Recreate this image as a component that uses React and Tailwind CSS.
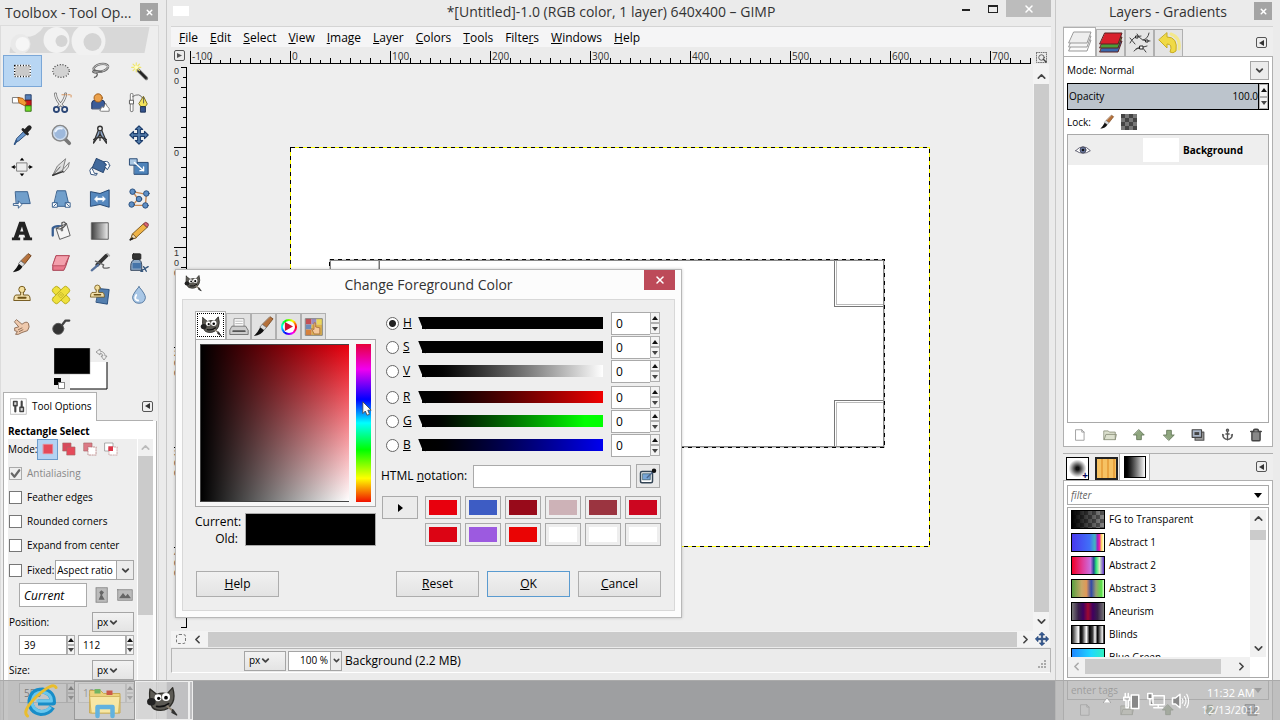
import React from 'react';
import { ChevronDown, ChevronUp, ChevronLeft, ChevronRight, X, Anchor, Trash2 } from 'lucide-react';

const Icon = ({ children, className = 'size-6' }) => (
    <svg viewBox="0 0 24 24" className={className} fill="none" strokeLinecap="round" strokeLinejoin="round">
        {children}
    </svg>
);

const Wilber = ({ className }) => (
    <Icon className={className}>
        <path d="M3 3 L8 7 Q12 5.500 16 6.500 L20 2 Q22 9 20 13 Q17 19 11 19 Q5 19 4 15 Q2 9 3 3Z" fill="#5c5a54" stroke="#2e2d29" />
        <circle cx="9" cy="9.500" r="2.600" fill="#fff" />
        <circle cx="15" cy="9" r="3" fill="#fff" />
        <circle cx="9.500" cy="10" r="1.200" fill="#000" />
        <circle cx="15" cy="9.500" r="1.400" fill="#000" />
        <ellipse cx="4" cy="12.500" rx="3.200" ry="2.800" fill="#222" />
        <path d="M8 16 Q13 17 17 14" stroke="#111" strokeWidth="1.300" />
        <path d="M16 16 L21 20" stroke="#8a7f70" strokeWidth="1.500" />
        <path d="M20 18.500 L23 22.500 L19.500 20.500Z" fill="#333" stroke="#333" />
    </Icon>
);

const Brush = ({ className }) => (
    <Icon className={className}>
        <path d="M19 2 L22 4 L15 13 L11 10Z" fill="#b5713b" stroke="#6b3d18" strokeWidth=".8" />
        <path d="M11 10 L15 13 L12.500 16 L8.500 13Z" fill="#ddd" stroke="#777" strokeWidth=".8" />
        <path d="M8.500 13 L12.500 16 Q10 21 2 22 Q6 18 8.500 13Z" fill="#111" />
    </Icon>
);

const Stamp = () => (
    <>
        <circle cx="12" cy="6" r="3.500" fill="#f3df9d" stroke="#6d5215" />
        <path d="M10.500 9 L10.500 12 L5 12 Q3 13 3 18 L21 18 Q21 13 19 12 L13.500 12 L13.500 9" fill="#f1dfac" stroke="#6d5215" />
        <path d="M8 15 H16" stroke="#6d5215" strokeWidth="2" />
    </>
);

const tools = [
    ['Rectangle Select', <><rect x="4" y="6" width="17" height="12" fill="#c9c9c9" stroke="#fff" strokeWidth="1.500" /><rect x="4" y="6" width="17" height="12" stroke="#000" strokeWidth="1.500" strokeDasharray="1 2" strokeLinecap="butt" /></>],
    ['Ellipse Select', <><ellipse cx="12" cy="12" rx="9" ry="7" fill="#d2d2d2" stroke="#333" strokeWidth="1.300" strokeDasharray="1 2" strokeLinecap="butt" /></>],
    ['Free Select', <><ellipse cx="13" cy="8.500" rx="8" ry="4" transform="rotate(-12 13 8.500)" stroke="#666" strokeWidth="2.600" /><ellipse cx="13" cy="8.500" rx="8" ry="4" transform="rotate(-12 13 8.500)" stroke="#ccc" /><path d="M6 11 Q2 13 6 14 Q11 14 8 18 L6 19 M6 11 L14 13" stroke="#666" strokeWidth="1.500" /></>],
    ['Fuzzy Select', <><path d="M11 11 L20 20" stroke="#777" strokeWidth="4" /><path d="M12 12 L19.500 19.500" stroke="#222" strokeWidth="2.400" /><path d="M9 3 V13 M4 8 H14 M5.500 4.500 L12.500 11.500 M12.500 4.500 L5.500 11.500" stroke="#f0e768" strokeWidth="1.200" /><circle cx="9" cy="8" r="2" fill="#fffec2" /></>],
    ['Select by Color', <><rect x="16" y="3" width="6" height="6" fill="#5680b8" stroke="#223a66" /><rect x="16" y="9" width="6" height="6" fill="#ce1a1a" stroke="#701010" /><rect x="16" y="15" width="6" height="6" fill="#72e027" stroke="#327010" /><rect x="2" y="6" width="7" height="6" fill="#fff" stroke="#777" /><path d="M8 6 L13 7 L17 12 L15 15 L9 12Z" fill="#f29a36" stroke="#a7570c" /></>],
    ['Scissors', <><path d="M6 2 Q6 9 15 17 M17 2 Q17 9 8 17" stroke="#666" strokeWidth="3" /><path d="M6 2 Q6 9 15 17 M17 2 Q17 9 8 17" stroke="#eee" strokeWidth="1.500" /><circle cx="7" cy="19" r="2.800" fill="#eee" stroke="#2c4777" strokeWidth="2" /><circle cx="16" cy="19" r="2.800" fill="#eee" stroke="#2c4777" strokeWidth="2" /><path d="M13 3 H23 V6" stroke="#d68d51" strokeDasharray="2 1.500" /></>],
    ['Foreground Select', <><path d="M3 18 V12 Q3 9 7 9 H14 Q17 9 17 12 V18Z" fill="#3c5c98" stroke="#152a56" /><circle cx="10" cy="6.500" r="4.500" fill="#eba14c" stroke="#9a5713" /><path d="M12 20 L14 16 L16 17 L18 12 L20 16 Q23 17 22 21 H14Z" fill="#fff" stroke="#777" /></>],
    ['Paths', <><path d="M4 3 V20" stroke="#777" strokeWidth="4" /><path d="M4 3 V20" stroke="#fff" strokeWidth="2" /><rect x="2" y="9" width="4" height="4" fill="#fff" stroke="#555" /><path d="M5 5 Q13 0 16 7" stroke="#666" /><path d="M17 5 L21 13 L19 16 H14 L12 13Z" fill="#f2e35c" stroke="#7b6b11" /><path d="M17 6 V12" stroke="#555" /><rect x="14" y="16" width="5" height="6" fill="#35548d" stroke="#162b50" /></>],
    ['Color Picker', <><path d="M5 20 L6 16 L14 8 L17 11 L9 18Z" fill="#6997cd" stroke="#274772" /><path d="M13 6 L18 11" stroke="#222" strokeWidth="3" /><path d="M16 8 L20 4" stroke="#222" strokeWidth="5" /><path d="M4 22 L6 18" stroke="#305687" strokeWidth="2" /></>],
    ['Zoom', <><path d="M16 16 L21 21" stroke="#777" strokeWidth="4" /><circle cx="11" cy="10" r="8.500" fill="#b5c9e1" stroke="#888" strokeWidth="1.500" /><circle cx="11" cy="10" r="6.800" fill="#9eb9dc" stroke="#dfe8f2" /><path d="M6 8 Q8 4 13 5" stroke="#edf5ff" strokeWidth="2" /></>],
    ['Measure', <><path d="M10 7 L5 20 L5 21 L12 11 L19 21 V19 L14 7Z" fill="#90a8c9" stroke="#333" strokeWidth="1.300" /><circle cx="12" cy="5" r="2.500" fill="#eee" stroke="#333" strokeWidth="1.500" /><path d="M5 17 Q12 12 19 17 M12 9 V18" stroke="#333" strokeWidth="1.300" /></>],
    ['Move', <path d="M12 2 L16 6 H13.500 V10.500 H18 V8 L22 12 L18 16 V13.500 H13.500 V18 H16 L12 22 L8 18 H10.500 V13.500 H6 V16 L2 12 L6 8 V10.500 H10.500 V6 H8Z" fill="#547eac" stroke="#1d3d6c" strokeWidth="1.200" />],
    ['Align', <><rect x="6.500" y="7.500" width="11" height="9" fill="#eee" stroke="#777" /><path d="M12 2 L14.500 5 H9.500Z M12 22 L14.500 19 H9.500Z M1 12 L4 9.500 V14.500Z M23 12 L20 9.500 V14.500Z" fill="#000" /><path d="M1 12 H5 M19 12 H23" stroke="#000" /></>],
    ['Crop', <><path d="M3 21 L8 11 L17 3 L14 15Z" fill="#ddd" stroke="#777" /><path d="M3 21 L11 12" stroke="#555" /><path d="M14 15 L21 7 L20 12 L15 18Z" fill="#eee" stroke="#777" /><path d="M3 21 L14 17" stroke="#333" strokeWidth="1.500" /></>],
    ['Rotate', <><rect x="5" y="5" width="13" height="11" fill="#41699c" stroke="#24426c" transform="rotate(24 12 11)" /><path d="M17 6 Q22 5 22 10 L23 10 L20 15 L17 11 L19 10 Q19 8 17 8Z M3 13 L5 17 Q5 20 9 19 L8 21 L2 20 L1 16Z" fill="#fff" stroke="#264876" /></>],
    ['Scale', <><rect x="7" y="7" width="15" height="13" fill="#4e83ba" stroke="#1c416d" /><rect x="2" y="3" width="8" height="7" fill="#a9c7e4" stroke="#1c416d" /><path d="M7 7 L17 16 M17 12 V16 H13" stroke="#fff" strokeWidth="1.500" /></>],
    ['Shear', <><path d="M5 4 H18 L21 17 H6Z" fill="#719fcb" stroke="#315a89" /><path d="M3 17 H8 V14 L12 18 L8 22 V19 H3Z" fill="#fff" stroke="#315a89" /></>],
    ['Perspective', <><path d="M8 3 H17 L21 20 H4Z" fill="#719fcb" stroke="#315a89" /><path d="M3 16 H8 V21 H3Z M17 16 H22 V21 H17Z" fill="#fff" stroke="#315a89" /><path d="M4 20 L7 17 M18 17 L21 20" stroke="#315a89" /></>],
    ['Flip', <><path d="M2 4 L12 6 L22 2 V21 L12 18 L2 20Z" fill="#5587bd" stroke="#1c416d" /><path d="M6 12 L9 9 V11 H15 V9 L18 12 L15 15 V13 H9 V15Z" fill="#fff" stroke="#fff" strokeWidth=".5" /></>],
    ['Cage Transform', <><path d="M5 4 L20 7 L19 19 L5 19 L11 12 L5 4" stroke="#c78955" strokeWidth="1.500" /><g fill="#5f8fc5" stroke="#244a79"><circle cx="5" cy="4" r="3" /><circle cx="20" cy="6" r="3" /><circle cx="4" cy="18" r="3" /><circle cx="19" cy="19" r="3" /><circle cx="12" cy="12" r="3" /></g></>],
    ['Text', <path d="M1 22 V19 H3 L9 2 H15 L21 19 H23 V22 H13.500 V19 H15.500 L14.500 16 H9 L8 19 H10 V22Z M10 12.500 H13.500 L12 7Z" fill="#222" fillRule="evenodd" />],
    ['Bucket Fill', <><path d="M3 17 V9 Q5 6 12 7" stroke="#375d90" strokeWidth="2.500" /><path d="M7 9 L18 4 L22 17 L11 21Z" fill="#f5f5f5" stroke="#555" /><path d="M7 9 Q13 12 18 4 M13 11 V3 Q16 1 17 4" stroke="#555" strokeWidth="1.300" /><circle cx="13" cy="11" r="1.500" fill="#777" /></>],
    ['Blend', <><defs><linearGradient id="blend"><stop stopColor="#444" /><stop offset="1" stopColor="#eee" /></linearGradient></defs><rect x="3" y="3" width="18" height="18" fill="url(#blend)" stroke="#555" /></>],
    ['Pencil', <><path d="M3 21 L5 15 L17 4 L21 8 L9 19Z" fill="#efb345" stroke="#7b571b" /><path d="M17 4 Q19 1 22 4 Q23 6 21 8Z" fill="#db6171" stroke="#7a3941" /><path d="M3 21 L5 15 L9 19Z" fill="#f0dfbd" stroke="#7b571b" /><path d="M2.500 21.500 L5 20" stroke="#222" strokeWidth="2" /></>],
    ['Paintbrush', <><path d="M19 2 L22 4 L15 13 L11 10Z" fill="#b5713b" stroke="#6b3d18" /><path d="M11 10 L15 13 L12 16 L8.500 13Z" fill="#ddd" stroke="#777" /><path d="M8.500 13 L12.500 16 Q10 21 2 22 Q6 18 8.500 13Z" fill="#111" /></>],
    ['Eraser', <><path d="M7 4 H21 L17 16 L15 20 H3 V16Z" fill="#e9798c" stroke="#a13347" /><path d="M7 4 H21 L16 15 H3Z" fill="#f3a0ac" stroke="#b84d5e" /></>],
    ['Airbrush', <><path d="M9 14 L19 4" stroke="#333" strokeWidth="4" /><path d="M3 20 L10 14" stroke="#55709b" strokeWidth="2.500" /><path d="M7 10 L16 14 Q13 19 22 17" stroke="#666" strokeWidth="1.500" /><path d="M20 2 L22 4" stroke="#aaa" strokeWidth="2" /></>],
    ['Ink', <><path d="M7 8 Q3 10 3 15 V20 H15 V14 Q15 10 12 8Z" fill="#8ca8c6" stroke="#283a53" /><rect x="5" y="2" width="9" height="6" rx="1" fill="#333" stroke="#222" /><rect x="5" y="12" width="9" height="6" fill="#4574a9" /><path d="M15 20 L22 16 M17 16 L20 21 M14 21 H16" stroke="#35557b" strokeWidth="1.500" /></>],
    ['Clone', <Stamp />],
    ['Heal', <><g stroke="#b5a81c" fill="#efe13c"><rect x="1" y="8" width="22" height="8" rx="3" transform="rotate(45 12 12)" /><rect x="1" y="8" width="22" height="8" rx="3" transform="rotate(-45 12 12)" /></g><path d="M9 12 L12 9 L15 12 L12 15Z M11 12 H13" stroke="#c4b52c" /></>],
    ['Perspective Clone', <><path d="M11 5 L22 6 L20 22 L8 20Z" fill="#537eae" stroke="#244a79" /><g transform="translate(-1 -1) scale(.85)"><Stamp /></g></>],
    ['Blur', <><path d="M12 3 Q5 11 5 15 Q6 21 12 21 Q18 21 19 15 Q19 11 12 3Z" fill="#a9c7e6" stroke="#50749d" /><path d="M9 12 Q6 17 11 18" stroke="#fff" strokeWidth="2" /></>],
    ['Smudge', <><path d="M4 6 L6 4 L12 9 Q17 5 19 8 Q21 12 18 16 L12 18 L8 20 L5 20 L7 17 L4 16 L4 13 L8 12Z" fill="#eec9ad" stroke="#8b6951" /><path d="M8 15 L12 13 M9 17 L13 15" stroke="#8b6951" /></>],
    ['Dodge / Burn', <><circle cx="9" cy="14" r="6" fill="#333" stroke="#555" /><path d="M13 10 L17 5 H21" stroke="#444" strokeWidth="2.500" /></>],
];

const TitleButton = () => (
    <button aria-label="Close" className="h-[18px] w-[18px] shrink-0 bg-[#a4a4a4] text-white flex items-center justify-center">
        <X size={9} strokeWidth={4} />
    </button>
);

const DockMenu = () => (
    <button aria-label="Configure tab" className="size-[11px] shrink-0 rounded-[2px] border border-[#555] flex items-center justify-center text-[#333]">
        <svg viewBox="0 0 6 6" className="size-[6px]"><path d="M5 0 V6 L0 3Z" fill="currentColor" /></svg>
    </button>
);

const Spin = ({ className = 'w-[10px]' }) => (
    <span className={`flex flex-col justify-between shrink-0 ${className}`}>
        <button aria-label="Increase" className="flex-1 border border-[#b0b0b0] bg-[#f3f3f3] flex items-center justify-center">
            <svg viewBox="0 0 6 4" className="w-[6px] h-1"><path d="M0 4 L3 0 L6 4Z" fill="#111" /></svg>
        </button>
        <button aria-label="Decrease" className="flex-1 border border-[#b0b0b0] bg-[#f3f3f3] flex items-center justify-center">
            <svg viewBox="0 0 6 4" className="w-[6px] h-1"><path d="M0 0 L3 4 L6 0Z" fill="#444" /></svg>
        </button>
    </span>
);

const Dropdown = ({ label, value, className }) => (
    <span className={`relative flex items-center ${className}`}>
        <select aria-label={label} className="appearance-none w-full h-full border border-[#a5a5a5] outline-none pl-1 bg-linear-to-b from-[#f2f2f2] to-[#e4e4e4]">
            <option>{value}</option>
        </select>
        <ChevronDown size={11} strokeWidth={4} className="absolute left-[16px] text-[#444] pointer-events-none" />
    </span>
);

const modes = [
    ['Replace', <rect x="5" y="5" width="14" height="14" fill="#e54a5a" stroke="#ee8890" />],
    ['Add', <><rect x="3" y="3" width="12" height="12" fill="#d9495a" stroke="#a66" /><rect x="9" y="9" width="12" height="12" fill="#e54a5a" stroke="#a66" /></>],
    ['Subtract', <><rect x="3" y="3" width="12" height="12" fill="#dc7a86" stroke="#a66" /><rect x="9" y="9" width="12" height="12" fill="#fff" stroke="#a66" strokeDasharray="2 2" /></>],
    ['Intersect', <><rect x="3" y="3" width="12" height="12" fill="#fff" stroke="#888" /><rect x="9" y="9" width="12" height="12" fill="#fff" stroke="#b88" strokeDasharray="2 2" /><rect x="8" y="8" width="7" height="7" fill="#dc3648" /></>],
];

const Check = ({ label, checked, disabled }) => (
    <label className={`h-6 flex items-center gap-[5px] ${disabled ? 'text-[#888]' : ''}`}>
        <span className="relative size-[13px] shrink-0">
            <input type="checkbox" defaultChecked={checked} disabled={disabled} className="block appearance-none size-[13px] border border-[#777] bg-white disabled:border-[#aaa] disabled:bg-[#eee]" />
            {checked && <Icon className="absolute inset-0 size-[13px]"><path d="M5 12 L10 18 L19 6" stroke="#666" strokeWidth="4" /></Icon>}
        </span>
        {label}
    </label>
);

const PairField = ({ label, value }) => (
    <span className="flex h-5 w-[56px]">
        <input aria-label={label} defaultValue={value} className="w-[48px] border border-[#aaa] bg-white pl-1" />
        <Spin className="w-2" />
    </span>
);

const ToolOptions = () => (
    <div className="flex-1 min-h-0 ml-[2px] mr-[1px] border-x border-[#b0b0b0] bg-white text-[10px] flex flex-col">
        <h2 className="h-[18px] shrink-0 px-1 font-bold leading-[20px]">Rectangle Select</h2>
        <div className="flex-1 min-h-0 flex ml-1 mr-[3px]">
            <div className="flex-1 min-w-0 bg-[#eee]">
                <div className="flex h-5 items-center">
                    Mode:
                    <div className="flex">
                        {modes.map(([name, art], i) => (
                            <button key={name} title={name} className={`size-[21px] flex items-center justify-center ${i === 0 ? 'border border-[#6d9ccb] bg-[#b4d3f3]' : ''}`}>
                                <Icon className="size-4">{art}</Icon>
                            </button>
                        ))}
                    </div>
                </div>
                <div className="pl-[1px] pt-[2px]">
                    <Check label="Antialiasing" checked disabled />
                    <Check label="Feather edges" />
                    <Check label="Rounded corners" />
                    <Check label="Expand from center" />
                    <div className="flex items-center h-[26px] pr-[3px]">
                        <Check label="Fixed:" />
                        <span className="relative flex flex-1 h-5 ml-[1px]">
                            <select aria-label="Fixed" className="appearance-none w-full border border-[#a5a5a5] bg-white pl-[1px]"><option>Aspect ratio</option></select>
                            <span className="absolute right-0 inset-y-0 w-[18px] border border-[#a5a5a5] bg-[#ececec] flex items-center justify-center pointer-events-none"><ChevronDown size={11} strokeWidth={4} className="text-[#444]" /></span>
                        </span>
                    </div>
                    <div className="flex items-center h-6 pl-[10px]">
                        <input aria-label="Aspect" defaultValue="Current" className="w-[68px] h-6 border border-[#aaa] bg-white pl-1 text-[12px] italic" />
                        {['Portrait', 'Landscape'].map((name) => (
                            <button key={name} title={name} className="ml-[7px] w-4 flex justify-center">
                                <Icon className="size-4">
                                    <rect x={name === 'Portrait' ? 3 : 1} y={name === 'Portrait' ? 1 : 4} width={name === 'Portrait' ? 17 : 22} height={name === 'Portrait' ? 22 : 16} fill="#bbb" stroke="#777" strokeDasharray="2 1" />
                                    {name === 'Portrait' ? <path d="M11 5 L15 8 L12 12 L16 19 H7 L10 12 L8 8Z" fill="#666" /> : <path d="M3 17 L9 9 L13 14 L16 10 L21 17Z" fill="#666" />}
                                </Icon>
                            </button>
                        ))}
                    </div>
                    <div className="mt-[3px] flex h-6 items-center justify-between pr-[3px]">
                        Position: <Dropdown label="Position unit" value="px" className="w-[42px] h-5" />
                    </div>
                    <div className="flex h-[22px] items-center justify-between pl-[10px] pr-[3px]">
                        <PairField label="Position X" value="39" />
                        <PairField label="Position Y" value="112" />
                    </div>
                    <div className="mt-[2px] flex h-6 items-center justify-between pr-[3px]">
                        Size: <Dropdown label="Size unit" value="px" className="w-[42px] h-5" />
                    </div>
                    <div className="flex h-[22px] items-center justify-between pl-[10px] pr-[3px]">
                        <PairField label="Width" value="556" />
                        <PairField label="Height" value="189" />
                    </div>
                </div>
            </div>
            <div className="w-[15px] flex flex-col items-center bg-[#f0f0f0] ml-[1px]">
                <ChevronUp size={13} strokeWidth={3} className="text-[#bbb] my-[2px]" />
                <div className="w-full h-[159px] bg-[#cbcbcb]" />
            </div>
        </div>
    </div>
);

const Toolbox = () => (
    <aside className="bg-[#ebebeb] border-r border-[#c9c9c9] pr-[7px] flex flex-col min-h-0 overflow-hidden">
        <header className="h-[25px] pl-[5px] pr-[1px] pb-[1px] flex items-center justify-between">
            <h1 className="text-[14px] text-[#333] whitespace-nowrap">Toolbox - Tool Op...</h1>
            <TitleButton />
        </header>
        <div className="flex-1 min-h-0 flex flex-col bg-[#eee] border-l border-r border-t border-[#dcdcdc]">
            <svg viewBox="0 0 156 29" className="w-full h-[29px] shrink-0">
                <path d="M42 1 H148 L143 27 H8 Q9 13 21 11 Q35 12 42 1Z" fill="#d8d8d8" />
                <circle cx="19" cy="18" r="10" fill="#e9e9e9" /><circle cx="21" cy="18" r="7" fill="#f6f6f6" />
                <circle cx="55" cy="14" r="13" fill="#f2f2f2" /><circle cx="60" cy="15" r="6" fill="#d4d4d4" />
                <circle cx="87" cy="15" r="17" fill="#f1f1f1" /><circle cx="91" cy="16" r="9" fill="#d4d4d4" />
            </svg>
            <div className="grid grid-cols-4 ml-[2px]">
                {tools.map(([name, art], i) => (
                    <button key={name} title={name} className={`h-8 flex items-center justify-center ${i === 0 ? 'border border-[#7ba7d7] bg-[#b8d6f3]' : ''}`}>
                        <Icon className="size-[22px]">{art}</Icon>
                    </button>
                ))}
            </div>
            <div className="h-[49px] shrink-0 flex justify-center pl-1">
                <svg viewBox="0 0 56 44" className="w-14 h-11 mt-[5px]">
                    <path d="M16 14 H53 V41 H16Z" fill="#fff" />
                    <path d="M16 41 H53 V14" fill="none" stroke="#000" />
                    <rect width="36" height="26" fill="#000" stroke="#999" strokeWidth=".5" />
                    <rect y="30" width="7" height="7" fill="#000" /><rect x="4.500" y="34.500" width="6" height="6" fill="#fff" stroke="#888" />
                    <path d="M42 4 L46 1 V3 Q51 4 51 8 H53 L50 12 L47 8 H49 Q48 5 46 5 V7Z" fill="#eee" stroke="#888" strokeWidth=".8" />
                </svg>
            </div>
            <div className="h-[29px] shrink-0 flex items-center justify-between ml-[2px] mr-[5px] border-b border-[#b0b0b0]">
                <button className="h-[29px] w-[94px] border border-b-0 border-[#b0b0b0] bg-white flex items-center gap-[5px] pl-[6px] text-[10px] whitespace-nowrap">
                    <Icon className="size-[17px] shrink-0"><path d="M1 1 H23 V23 H1Z" stroke="#aaa" /><path d="M5 5 H10 V11 H5Z M14 13 H19 V19 H14Z" fill="#ddd" stroke="#444" strokeWidth="2" /><path d="M7.500 11 V19 M16.500 5 V13" stroke="#444" strokeWidth="3" /></Icon>
                    Tool Options
                </button>
                <DockMenu />
            </div>
            <ToolOptions />
        </div>
    </aside>
);

const menus = [['', 'F', 'ile'], ['', 'E', 'dit'], ['', 'S', 'elect'], ['', 'V', 'iew'], ['', 'I', 'mage'], ['', 'L', 'ayer'], ['', 'C', 'olors'], ['', 'T', 'ools'], ['Filte', 'r', 's'], ['', 'W', 'indows'], ['', 'H', 'elp']];
const ticks = Array.from({ length: 85 }, (_, i) => i * 10);

const RulerX = () => (
    <svg className="h-[17px] flex-1 min-w-0 overflow-hidden" shapeRendering="crispEdges">
        <path d="M3 16.500 H844" stroke="#000" />
        {ticks.map((x) => <path key={x} d={`M${x + 3.5} ${x % 100 === 0 ? 4 : x % 20 === 0 ? 11 : 13} V17`} stroke="#000" />)}
        {ticks.filter((x) => x % 100 === 0).map((x) => <text key={x} x={x + 5} y="13" fontSize="10" fill="#333">{x - 100}</text>)}
    </svg>
);

// the first label is scrolled half out of view, so only its last digits are drawn
const rulerLabels = [['00', 10], ['0', 92], ['100', 192], ['200', 292], ['300', 392], ['400', 492]];

const RulerY = () => (
    <svg className="w-4 shrink-0 h-full overflow-hidden font-['Liberation_Sans',sans-serif]" shapeRendering="crispEdges">
        <path d="M15.500 3 V563" stroke="#000" />
        {ticks.filter((y) => y < 570).map((y) => <path key={y} d={`M${(y - 80) % 100 === 0 ? 3 : y % 20 === 0 ? 10 : 12} ${y + 3.5} H16`} stroke="#000" />)}
        {rulerLabels.map(([label, top]) => [...label].map((ch, j) => (
            <text key={`${top}-${j}`} x="3" y={top + j * 10} fontSize="9" fill="#333">{ch}</text>
        )))}
    </svg>
);

const Canvas = () => (
    <div className="relative flex-1 min-w-0 overflow-hidden bg-[#eee]">
        <svg viewBox="0 0 640 400" className="absolute left-[103px] top-[83px] w-[640px] h-[400px]" shapeRendering="crispEdges" fill="none">
            <rect width="640" height="400" fill="#fff" />
            <rect x=".5" y=".5" width="639" height="399" stroke="#ffff00" />
            <rect x=".5" y=".5" width="639" height="399" stroke="#000" strokeDasharray="4 4" />
            <g stroke="#777">
                <rect x="39.500" y="112.500" width="50" height="47" /><rect x="544.500" y="112.500" width="50" height="47" />
                <rect x="544.500" y="253.500" width="50" height="47" />
            </g>
            <g stroke="#bbb">
                <path d="M88.500 114 V158 M546.500 114 V157.500 H593 M546.500 299 V255.500 H593" />
            </g>
            <rect x="40.500" y="113.500" width="553" height="186" stroke="#888" />
            <rect x="39.500" y="112.500" width="555" height="188" stroke="#ccc" />
            <rect x="39.500" y="112.500" width="555" height="188" stroke="#000" strokeDasharray="4 4" />
        </svg>
    </div>
);

const ImageWindow = () => (
    <main className="bg-[#ebebeb] h-[calc(100vh-40px)] min-w-0 flex flex-col px-1">
        <header className="relative h-[27px] shrink-0 flex items-start justify-between border-b border-[#d4d4d4]">
            <span className="mt-[6px] ml-[2px] w-4 h-[10px] bg-white" />
            <h1 className="absolute inset-x-0 top-0 h-6 leading-6 text-center text-[14px] text-[#333] pointer-events-none">*[Untitled]-1.0 (RGB color, 1 layer) 640x400 – GIMP</h1>
            <div className="flex items-start">
                <button aria-label="Minimize" className="w-[27px] h-[17px] flex justify-center items-end pb-[6px]"><span className="w-2 h-[2px] bg-[#222]" /></button>
                <button aria-label="Maximize" className="w-[27px] h-[17px] flex justify-center items-center"><span className="w-[10px] h-2 border border-t-2 border-[#222]" /></button>
                <button aria-label="Close" className="w-[45px] h-[17px] bg-[#bcbcbc] text-white flex justify-center items-center"><X size={12} strokeWidth={3} /></button>
            </div>
        </header>
        <nav className="h-5 shrink-0 bg-[#f5f5f6] flex items-end gap-3 pl-2 text-[12px]">
            {menus.map(([pre, key, post]) => <button key={key + post}>{pre}<u>{key}</u>{post}</button>)}
        </nav>
        <div className="flex h-[17px] shrink-0 mr-[2px]">
            <span className="w-4 flex items-center justify-center"><button aria-label="Image menu" className="size-[11px] rounded-[2px] border border-[#555] flex items-center justify-center"><svg viewBox="0 0 6 6" className="size-[5px]"><path d="M0 0 V6 L6 3Z" fill="#555" /></svg></button></span>
            <RulerX />
            <span className="w-4 flex items-end justify-center pb-[1px]"><Icon className="size-[11px]"><rect x="1" y="1" width="22" height="22" stroke="#666" strokeWidth="2" strokeDasharray="2 3" /><circle cx="12" cy="12" r="6" stroke="#555" strokeWidth="2" /><path d="M16 16 L22 22" stroke="#444" strokeWidth="3" /></Icon></span>
        </div>
        <div className="flex flex-1 min-h-0 mr-[2px]">
            <RulerY />
            <Canvas />
            <div className="w-4 bg-[#f3f3f3] flex flex-col items-center">
                <ChevronUp size={13} strokeWidth={3} className="mt-[6px] mb-[1px] text-[#444] shrink-0" />
                <div className="flex-1 w-[15px] bg-[#cbcbcb]" />
                <ChevronDown size={13} strokeWidth={3} className="my-[3px] text-[#444] shrink-0" />
            </div>
        </div>
        <div className="flex h-4 shrink-0 items-center bg-[#f3f3f3] mr-[1px]">
            <span className="w-5 flex justify-center"><span className="size-[10px] rounded-[3px] border border-dashed border-[#777]" /></span>
            <ChevronLeft size={13} strokeWidth={3} className="text-[#444] mr-1" />
            <div className="flex-1 h-[15px] bg-[#cbcbcb]" />
            <ChevronRight size={13} strokeWidth={3} className="text-[#444] mx-[2px]" />
            <Icon className="size-4"><path d="M12 2 L16 6 H13 V11 H18 V8 L22 12 L18 16 V13 H13 V18 H16 L12 22 L8 18 H11 V13 H6 V16 L2 12 L6 8 V11 H11 V6 H8Z" fill="#355b96" stroke="#1d3d6c" /></Icon>
        </div>
        <footer className="mt-[1px] mb-[7px] h-[25px] shrink-0 border border-[#b5b5b5] border-b-white flex items-center pl-[72px] text-[12px]">
            <Dropdown label="Unit" value="px" className="w-[42px] h-5 text-[10px]" />
            <span className="relative ml-[2px] h-5 w-[54px] text-[10px]">
                <select aria-label="Zoom" className="appearance-none w-full h-full border border-[#a5a5a5] bg-white pl-[11px]"><option>100 %</option></select>
                <span className="absolute right-0 inset-y-0 w-3 border border-[#a5a5a5] bg-[#ececec] flex items-center justify-center pointer-events-none"><ChevronDown size={9} strokeWidth={4} className="text-[#444]" /></span>
            </span>
            <span className="ml-[3px]">Background (2.2 MB)</span>
            <svg viewBox="0 0 8 8" className="size-2 ml-auto self-end mb-1 mr-1"><path d="M6 0 h2 v2 h-2z M3 3 h2 v2 h-2z M6 3 h2 v2 h-2z M0 6 h2 v2 h-2z M3 6 h2 v2 h-2z M6 6 h2 v2 h-2z" fill="#aaa" /></svg>
        </footer>
    </main>
);

const LayersIcon = ({ colors, line }) => (
    <Icon>
        {[...colors].reverse().map((c, i) => <path key={c + i} d={`M6 ${10 - i * 4} H23 L19 ${21 - i * 4} H1Z`} fill={c} stroke={line} />)}
    </Icon>
);

const layerTabs = [
    ['Layers', <LayersIcon colors={['#eee', '#f5f5f5', '#fafafa']} line="#999" />],
    ['Channels', <LayersIcon colors={['#d8202c', '#4c9c3a', '#3a68ad']} line="#5a2020" />],
    ['Paths', <Icon><path d="M2 12 Q5 5 13 5 M9 3 Q13 11 22 10 M6 20 Q13 12 18 21 M21 2 Q20 8 15 9 M2 7 L7 13 M19 15 L8 18" stroke="#444" /><path d="M8 5 h2 v2 h-2z M18 9 h2 v2 h-2z M12 15 h3 v3 h-3z" fill="#fff" stroke="#222" /></Icon>],
    ['Undo', <Icon><path d="M14 3 Q24 7 22 18" stroke="#f3e88c" strokeWidth="3" /><path d="M10 2 V6 Q21 6 19 20 Q16 23 13 21 Q16 13 10 13 V17 L2 9Z" fill="#f0da45" stroke="#c8ad22" /></Icon>],
];

const layerActions = [
    ['New layer', <path d="M5 3 H15 L19 7 V21 H5Z M15 3 V7 H19" fill="#fff" stroke="#999" strokeWidth="1.500" />],
    ['New group', <path d="M2 5 H9 L11 7 H21 V20 H2Z M2 20 L5 11 H23 L21 20" fill="#dce0ce" stroke="#8c917c" strokeWidth="1.500" />],
    ['Raise', <path d="M12 3 L21 12 H16 V20 H8 V12 H3Z" fill="#8fa67f" stroke="#65785a" strokeWidth="1.500" />],
    ['Lower', <path d="M12 21 L21 12 H16 V4 H8 V12 H3Z" fill="#8fa67f" stroke="#65785a" strokeWidth="1.500" />],
    ['Duplicate', <><rect x="7" y="7" width="15" height="14" fill="#999" stroke="#555" strokeWidth="2" /><rect x="2" y="3" width="16" height="13" fill="#aab6c8" stroke="#444" strokeWidth="2" /><rect x="6" y="7" width="8" height="5" fill="#444" /></>],
];

const gradients = [
    ['FG to Transparent', 'bg-[linear-gradient(to_right,#000,transparent),repeating-conic-gradient(#555_0_25%,#888_0_50%)] bg-[length:100%_100%,8px_8px]'],
    ['Abstract 1', 'bg-[linear-gradient(to_right,#4838ee,#4070f8_55%,#40b8c0_72%,#a020c0_80%,#ee20a0_86%,#ffe860_93%,#fff)]'],
    ['Abstract 2', 'bg-[linear-gradient(to_right,#f00028,#e040a0_35%,#c870e0_58%,#204890_68%,#28e078_75%,#d8f0c0_86%,#6030d0)]'],
    ['Abstract 3', 'bg-[linear-gradient(to_right,#58a040,#c8a868_30%,#e09858_45%,#3048a8_60%,#98a070_75%,#58e048_92%,#e0ffd0)]'],
    ['Aneurism', 'bg-[linear-gradient(to_right,#777,#382048_20%,#400060_35%,#a00830_50%,#400060_65%,#382048_80%,#777)]'],
    ['Blinds', 'bg-[linear-gradient(to_right,#222,#fff_20%,#000_27%,#333_33%,#fff_45%,#000_55%,#444_65%,#fff_72%,#000_80%,#eee_95%,#000)]'],
    ['Blue Green', 'bg-[linear-gradient(to_right,#2088ff,#20d8ff_60%,#30f0c0)]'],
];

const DockRight = () => (
    <aside className="bg-[#ebebeb] border-l border-[#c9c9c9] pl-[7px] pr-[7px] flex flex-col min-h-0 overflow-hidden text-[10px]">
        <header className="relative h-[27px] shrink-0 flex items-center justify-end border-b border-[#d4d4d4]">
            <h1 className="absolute inset-x-0 top-0 text-center text-[14px] leading-6 text-[#333] pointer-events-none">Layers - Gradients</h1>
            <span className="mr-[1px] mb-1"><TitleButton /></span>
        </header>
        <div className="h-[30px] shrink-0 flex items-end border-b border-[#b0b0b0] pr-[6px] bg-[#eee]">
            {layerTabs.map(([name, art], i) => (
                <button key={name} title={name} className={`flex items-center justify-center border border-b-0 border-[#b0b0b0] ${i === 0 ? 'w-[33px] h-[29px] bg-white' : 'w-[29px] h-[27px] bg-[#e4e4e4]'}`}>{art}</button>
            ))}
            <span className="ml-auto mb-2"><DockMenu /></span>
        </div>
        <section className="bg-white border border-t-0 border-[#b0b0b0] px-[3px] shrink-0">
            <div className="flex items-center h-[26px]">
                Mode:
                <span className="relative ml-[3px] flex-1 h-[19px]">
                    <select aria-label="Layer mode" className="appearance-none w-full h-full bg-white"><option>Normal</option></select>
                    <span className="absolute right-0 inset-y-0 w-[19px] border border-[#a5a5a5] bg-[#ececec] flex items-center justify-center pointer-events-none"><ChevronDown size={11} strokeWidth={4} className="text-[#444]" /></span>
                </span>
            </div>
            <div className="h-[27px] border border-black bg-[#bcc4cc] flex items-center pl-[1px]">
                <label htmlFor="opacity">Opacity</label>
                <input id="opacity" defaultValue="100.0" className="flex-1 min-w-0 text-right bg-transparent" />
                <Spin className="w-[10px] h-full border-l border-black bg-white" />
            </div>
            <div className="h-6 flex items-center">
                Lock:
                <button title="Lock pixels" className="ml-[8px]"><Brush className="size-4" /></button>
                <button title="Lock alpha" className="ml-[6px] size-4 bg-[repeating-conic-gradient(#777_0_25%,#444_0_50%)] bg-[length:8px_8px]" />
            </div>
            <div className="h-[289px] border border-[#a9a9a9]">
                <div className="h-[30px] bg-[#eee] flex items-center">
                    <Icon className="size-4 ml-[7px]"><path d="M1 13 Q12 1 23 13 Q12 21 1 13Z" fill="#fff" stroke="#667" strokeWidth="1.500" /><circle cx="12" cy="12" r="4.500" fill="#6878a0" stroke="#334" /><circle cx="12" cy="12" r="2" fill="#111" /></Icon>
                    <span className="ml-[52px] w-9 h-6 bg-white" />
                    <strong className="ml-1">Background</strong>
                </div>
            </div>
            <div className="h-[23px] flex items-center justify-between px-[6px]">
                {layerActions.map(([name, art]) => <button key={name} title={name}><Icon className="size-[14px]">{art}</Icon></button>)}
                <button title="Anchor"><Anchor size={13} strokeWidth={2.5} className="text-[#555]" /></button>
                <button title="Delete"><Trash2 size={14} strokeWidth={2.5} className="text-[#444] fill-[#888]" /></button>
            </div>
        </section>
        <div className="mt-[6px] h-[28px] shrink-0 flex items-end border-t border-b border-[#b0b0b0] bg-[#eee] pl-[3px] pr-[6px]">
            <button title="Brushes" className="mr-[6px] size-[23px] border border-black bg-[radial-gradient(circle,#111_10%,#fff_60%)] flex items-end justify-end text-[10px] leading-[8px] font-bold text-[#005]">+</button>
            <button title="Patterns" className="mr-[1px] size-[23px] border-2 border-[#222] bg-[repeating-linear-gradient(to_right,#f6c263_0_4px,#e9a440_4px_6px)]" />
            <button title="Gradients" className="w-[31px] h-[27px] border border-b-0 border-[#b0b0b0] bg-white flex items-center justify-center"><span className="size-[22px] border border-black bg-linear-to-r from-black to-white" /></button>
            <span className="ml-auto mb-2"><DockMenu /></span>
        </div>
        <section className="bg-white border-x border-[#b0b0b0] px-[3px] pt-[4px] shrink-0">
            <div className="h-5 border border-[#a9a9a9] flex items-center pr-[6px]">
                <input aria-label="Filter" placeholder="filter" className="flex-1 min-w-0 px-[3px] italic placeholder:text-[#666]" />
                <svg viewBox="0 0 8 5" className="w-2 h-[5px]"><path d="M0 0 H8 L4 5Z" fill="#000" /></svg>
            </div>
            <div className="mt-[2px] h-[171px] border border-[#a9a9a9] flex flex-col">
                <div className="flex-1 min-h-0 flex">
                    <ul className="flex-1 overflow-hidden pl-[3px]">
                        {gradients.map(([name, fill]) => (
                            <li key={name} className="h-[23px] flex items-center gap-1">
                                <span className={`w-[34px] h-[19px] border border-black ${fill}`} />{name}
                            </li>
                        ))}
                    </ul>
                    <div className="w-4 mr-[2px] mt-[2px] bg-[#f1f1f1] flex flex-col items-center">
                        <ChevronUp size={13} strokeWidth={3} className="text-[#444] my-[2px]" />
                        <div className="h-[10px] w-full bg-[#cbcbcb] mt-[3px]" />
                        <ChevronDown size={13} strokeWidth={3} className="text-[#444] mt-auto mb-[2px]" />
                    </div>
                </div>
                <div className="h-5 bg-[#f1f1f1] mr-[18px] pb-[2px] flex items-center shrink-0">
                    <ChevronLeft size={13} strokeWidth={3} className="text-[#aaa] mx-[2px]" />
                    <div className="h-[15px] w-[136px] bg-[#cbcbcb]" />
                    <ChevronRight size={13} strokeWidth={3} className="text-[#444] ml-auto mr-[2px]" />
                </div>
            </div>
            <div className="mt-[2px] h-5 border border-[#a9a9a9] flex items-center pr-[6px]">
                <input aria-label="Tags" placeholder="enter tags" className="flex-1 min-w-0 px-[3px] placeholder:text-[#777]" />
                <svg viewBox="0 0 8 5" className="w-2 h-[5px]"><path d="M0 0 H8 L4 5Z" fill="#777" /></svg>
            </div>
            <div className="h-5 flex items-center justify-between px-[11px]">
                {layerActions.map(([name, art]) => <Icon key={name} className="size-[14px]">{art}</Icon>)}
            </div>
        </section>
    </aside>
);

const channels = [
    ['H', 'bg-black'],
    ['S', 'bg-black'],
    ['V', 'bg-linear-to-r from-black to-white'],
    ['R', 'bg-linear-to-r from-black to-[#f00000]'],
    ['G', 'bg-linear-to-r from-black to-[#00ff00] to-90%'],
    ['B', 'bg-linear-to-r from-black to-[#0000f0]'],
];

const swatches = [
    'bg-[#e8000d]', 'bg-[#3d5cc4]', 'bg-[#980a1a]', 'bg-[#cdb2b7]', 'bg-[#9b3440]', 'bg-[#cc0620]',
    'bg-[#dc0414]', 'bg-[#9c5ae0]', 'bg-[#ea0404]', 'bg-white', 'bg-white', 'bg-white',
];

const pickerTabs = [
    ['GIMP', <Wilber className="size-[22px]" />],
    ['CMYK', <Icon className="size-[20px]"><path d="M6 11 V2 H18 V11" fill="#fff" stroke="#888" /><path d="M8 5 H16 M8 8 H16" stroke="#aaa" /><path d="M4 11 H20 L23 16 V21 H1 V16Z" fill="#ccc" stroke="#666" /><path d="M5 17 H19" stroke="#555" strokeWidth="2" /></Icon>],
    ['Watercolor', <Brush className="size-[23px]" />],
    ['Wheel', <span className="size-4 rounded-full bg-[conic-gradient(from_90deg,#f00,#f0f,#00f,#0ff,#0f0,#ff0,#f00)] flex items-center justify-center"><span className="size-3 rounded-full bg-white flex items-center justify-center"><svg viewBox="0 0 10 10" className="size-[9px]"><path d="M1 0 L10 5 L1 10Z" fill="#d01030" /></svg></span></span>],
    ['Palette', <Icon className="size-[20px]"><path d="M2 2 H9 V9 H2Z" fill="#c34f55" /><path d="M9 2 H15 V9 H9Z" fill="#9a8cc0" /><path d="M15 2 H22 V9 H15Z" fill="#ead65c" /><path d="M2 9 H9 V15 H2Z" fill="#6e8cba" /><path d="M9 9 H22 V22 H9Z" fill="#ddb24c" /><path d="M2 15 H9 V22 H2Z" fill="#d7813c" /><path d="M2 2 H22 V22 H2Z" stroke="#777" /><path d="M12 20 L9 14 L12 15 V7 H14 V12 L19 13 V20Z" fill="#f5c99d" stroke="#a56c3d" /></Icon>],
];

const DialogButton = ({ first, rest, primary }) => (
    <button className={`h-[26px] w-[83px] border bg-linear-to-b from-[#f1f1f1] to-[#e3e3e3] ${primary ? 'border-[#5a9bd0]' : 'border-[#adadad]'}`}><u>{first}</u>{rest}</button>
);

const ColorDialog = () => (
    <div role="dialog" aria-label="Change Foreground Color" className="absolute left-[175px] top-[269px] w-[507px] bg-[#fcfcfc] border border-[#b8b8b8] px-[6px] pb-[6px] text-[12px] shadow-[0_0_3px_rgba(0,0,0,0.2)]">
        <header className="relative h-[29px] flex items-start justify-between">
            <Wilber className="size-[18px] mt-1 ml-[2px]" />
            <h2 className="absolute inset-x-0 top-0 text-center text-[14px] leading-[30px] text-[#333] pointer-events-none">Change Foreground Color</h2>
            <button aria-label="Close dialog" className="w-[31px] h-5 bg-[#bd4a59] text-white flex items-center justify-center"><X size={12} strokeWidth={3} /></button>
        </header>
        <div className="border border-[#d8d8d8] bg-[#eee] pl-3 pr-[13px] pt-[11px] pb-[13px]">
            <div className="flex justify-between">
                <div className="w-[181px]">
                    <div className="flex items-end h-7">
                        {pickerTabs.map(([name, art], i) => (
                            <button key={name} title={name} className={`flex items-center justify-center border border-b-0 border-[#b0b0b0] ${i === 0 ? 'w-[31px] h-[28px] bg-white outline outline-dotted outline-black -outline-offset-3' : 'w-[25px] h-[26px] bg-[#e2e2e2]'}`}>{art}</button>
                        ))}
                    </div>
                    <div className="h-[168px] border border-[#a9a9a9] bg-[#f7f7f7] p-1 flex gap-[7px]">
                        <div className="flex-1 border border-[#444] border-r-0 bg-[linear-gradient(to_right,#000,transparent),linear-gradient(to_bottom,#ea000e,#fff)]" />
                        <div className="relative w-[15px] bg-[linear-gradient(to_bottom,#e6003a,#f000f0_16%,#0000ff_35%,#00ffff_50%,#00ff00_67%,#ffff00_85%,#f01000)]">
                            <svg viewBox="0 0 12 18" className="absolute left-[6px] top-[57px] w-[10px] h-[15px]"><path d="M1 1 V15 L4 12 L6 17 L9 16 L7 11 H11Z" fill="#fff" stroke="#444" /></svg>
                        </div>
                    </div>
                    <div className="mt-[6px] h-[33px] flex">
                        <div className="w-12 text-right mr-[2px] pr-[5px] leading-[17px]"><div>Current:</div><div>Old:</div></div>
                        <div className="flex-1 border border-[#aaa] bg-black" />
                    </div>
                </div>
                <div className="w-[280px]">
                    {channels.map(([name, fill], i) => (
                        <div key={name} className={`h-6 flex items-center pr-[1px] ${i === 3 ? 'mt-[2px]' : ''}`}>
                            <label className="flex items-center gap-1 w-[36px]">
                                <input type="radio" name="channel" defaultChecked={i === 0} className="appearance-none size-[13px] rounded-full border border-[#666] bg-white ml-[5px] shrink-0 checked:bg-[radial-gradient(circle,#222_0_3px,#fff_4px)]" />
                                <u>{name}</u>
                            </label>
                            <input type="range" aria-label={`${name} slider`} min="0" max="255" defaultValue="0" className={`appearance-none ml-[5px] h-3 w-[181px] ${fill} [&::-webkit-slider-thumb]:appearance-none [&::-webkit-slider-thumb]:-ml-1 [&::-webkit-slider-thumb]:w-2 [&::-webkit-slider-thumb]:h-[13px] [&::-webkit-slider-thumb]:bg-black [&::-webkit-slider-thumb]:[clip-path:polygon(0_0,100%_0,100%_100%,45%_70%)]`} />
                            <input aria-label={`${name} value`} defaultValue="0" className="ml-auto w-[39px] h-[23px] border border-r-0 border-[#aaa] bg-white pl-1" />
                            <Spin className="w-[10px] h-[22px]" />
                        </div>
                    ))}
                    <div className="mt-[6px] h-[26px] flex items-center justify-between pr-[1px]">
                        <label htmlFor="html">HTML <u>n</u>otation:</label>
                        <input id="html" className="h-[23px] w-[158px] border border-[#aaa] bg-white px-1" />
                        <button aria-label="Pick color" className="size-6 border border-[#aaa] bg-[#e9e9e9] flex items-center justify-center"><Icon className="size-[18px]"><rect x="2" y="6" width="16" height="15" rx="2" fill="#fff" stroke="#345" strokeWidth="2" /><rect x="5" y="9" width="10" height="8" fill="#77a5d7" stroke="#356" /><path d="M11 14 L19 6" stroke="#4b668c" strokeWidth="2" /><circle cx="20" cy="5" r="3" fill="#111" /></Icon></button>
                    </div>
                    <div className="mt-[7px] flex items-start justify-between">
                        <button aria-label="Add to history" className="ml-[1px] w-9 h-[23px] border border-[#aaa] bg-[#ebebeb] flex items-center justify-center"><svg viewBox="0 0 5 8" className="w-[5px] h-2"><path d="M0 0 L5 4 L0 8Z" fill="#000" /></svg></button>
                        <div className="grid grid-cols-6 gap-x-1 gap-y-1">
                            {swatches.map((c, i) => <button key={i} aria-label={`Recent color ${i + 1}`} className="w-9 h-[23px] border border-[#aaa] bg-[#eee] p-[3px]"><span className={`block h-full ${c}`} /></button>)}
                        </div>
                    </div>
                </div>
            </div>
            <div className="mt-[25px] flex gap-2 pl-[1px]">
                <DialogButton first="H" rest="elp" />
                <span className="flex-1" />
                <DialogButton first="R" rest="eset" />
                <DialogButton first="O" rest="K" primary />
                <DialogButton first="C" rest="ancel" />
            </div>
        </div>
    </div>
);

const Taskbar = () => (
    <footer className="absolute inset-x-0 bottom-0 h-10 bg-[#adadad]/70 border-t border-[#aaa] flex items-stretch text-white">
        <button aria-label="Internet Explorer" className="w-[74px] flex items-center justify-center pl-2">
            <Icon className="size-9"><path d="M19.500 16 Q17 20 12 20 Q5 19 5 12 Q6 5 13 5 Q20 6 20 13 H10" stroke="#188dc8" strokeWidth="4" strokeLinecap="butt" /><path d="M18.500 16 Q16 19 12 19 Q6 18 6 12 Q7 6 13 6 Q19 7 19 12 H9" stroke="#69c7ed" strokeWidth="2" strokeLinecap="butt" /><path d="M3 22 Q-1 19 9 9 Q20 -1 22 3" stroke="#e9bd2e" strokeWidth="2" /></Icon>
        </button>
        <button aria-label="File Explorer" className="w-[61px] border border-[#999] bg-white/20 flex items-center justify-center">
            <Icon className="size-9"><path d="M2 5 H9 L11 7 H22 V20 H2Z" fill="#ecd27d" stroke="#c6a549" strokeWidth=".6" /><path d="M5 4 H9 V7 H5Z" fill="#72b563" /><path d="M13 5 H17 V8 H13Z" fill="#cc5a49" /><path d="M2 9 H22 L21 20 H3Z" fill="#f7e7a4" stroke="#cfb35c" strokeWidth=".6" /><path d="M7 22 V16 H17 V22" stroke="#62b2df" strokeWidth="3" /></Icon>
        </button>
        <button aria-label="GIMP" className="w-[54px] border border-[#eee] bg-white/35 flex items-center justify-center"><Wilber className="size-8" /></button>
        <button aria-label="GIMP windows" className="w-1 border border-[#eee] bg-white/35" />
        <div className="ml-auto flex items-center pr-5">
            <button aria-label="Show hidden icons" className="mr-3"><svg viewBox="0 0 8 5" className="w-2 h-[5px]"><path d="M0 5 L4 0 L8 5Z" fill="#fff" stroke="#777" strokeWidth=".5" /></svg></button>
            <Icon className="size-[18px] mr-[6px]"><path d="M11 4 H21 V22 H11Z" fill="#888" stroke="#fff" strokeWidth="2" /><path d="M3 2 V6 M7 2 V6 M1 7 H9 V11 H7 V21 H4 V11 H1Z" stroke="#fff" strokeWidth="2" /></Icon>
            <Icon className="size-[18px] mr-[6px]"><path d="M8 5 H23 V17 H8Z M15 17 V21 M9 21 H21" stroke="#fff" strokeWidth="2" /><path d="M1 2 H7 V9 H1Z M4 9 V17 H8" fill="#888" stroke="#fff" strokeWidth="2" /></Icon>
            <Icon className="size-[18px] mr-[13px]"><path d="M2 8 H6 L12 3 V21 L6 16 H2Z" fill="#888" stroke="#fff" strokeWidth="2" /><path d="M15 9 Q17 12 15 15 M18 6 Q22 12 18 18 M21 3 Q26 12 21 21" stroke="#fff" strokeWidth="1.500" /></Icon>
            <time className="text-[11px] leading-[17px] text-center whitespace-nowrap">11:32 AM<br />12/13/2012</time>
        </div>
    </footer>
);

const App = () => (
    <div className="relative h-screen overflow-hidden bg-[#7e8085] grid grid-cols-[167px_minmax(0,1fr)_225px] text-black font-['Open_Sans','Noto_Sans',sans-serif]">
        <Toolbox />
        <ImageWindow />
        <DockRight />
        <ColorDialog />
        <Taskbar />
    </div>
);

export default App;
